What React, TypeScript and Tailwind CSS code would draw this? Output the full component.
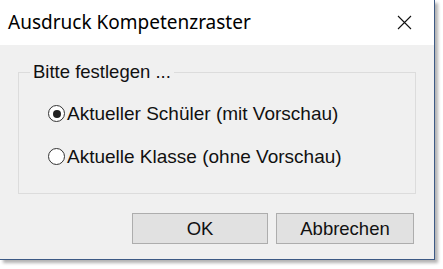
import React from 'react';

const body = { fontFamily: '"Liberation Sans", Arial, sans-serif' };

function Radio({ checked }: { checked?: boolean }) {
  return (
    <span className="w-[17px] h-[17px] rounded-full border-[1.5px] border-[#333] bg-white flex items-center justify-center shrink-0">
      {checked && <span className="w-[8px] h-[8px] rounded-full bg-[#222]" />}
    </span>
  );
}

export default function App() {
  return (
    <div className="w-[443px] h-[269px] bg-white">
      <div className="w-[435px] h-[260px] bg-[#f0f0f0] border-r border-b border-[#3d5a85] shadow-[3px_3px_3px_rgba(0,0,0,0.3)] flex flex-col">
        {/* Title bar */}
        <div className="h-[45px] bg-white flex items-center justify-between pl-[8px] pr-[22px] shrink-0">
          <span className="text-[19px] text-black" style={{ fontFamily: '"Noto Sans", sans-serif' }}>
            Ausdruck Kompetenzraster
          </span>
          <svg width="15" height="15" viewBox="0 0 15 15" className="text-[#111]">
            <path d="M1 1 L14 14 M14 1 L1 14" stroke="currentColor" strokeWidth="1.1" fill="none" />
          </svg>
        </div>

        {/* Content */}
        <div className="flex-1 flex flex-col px-[18px] pt-[16px]" style={body}>
          <fieldset className="border border-[#dcdcdc] w-[398px] h-[133px]">
            <legend className="ml-[11px] px-[3px] text-[18.5px] text-[#111] leading-[22px]">Bitte festlegen ...</legend>
            <div className="flex flex-col gap-[20px] pl-[29px] pt-[19px]">
              <label className="flex items-center gap-[2px] text-[19px] text-[#111] leading-[23px]">
                <Radio checked />
                <span>Aktueller Schüler (mit Vorschau)</span>
              </label>
              <label className="flex items-center gap-[2px] text-[19px] text-[#111] leading-[23px]">
                <Radio />
                <span>Aktuelle Klasse (ohne Vorschau)</span>
              </label>
            </div>
          </fieldset>

          <div className="flex justify-end gap-[8px] mt-[19px] pr-[2px]">
            <button className="w-[136px] h-[31px] bg-[#e1e1e1] border border-[#adadad] text-[18.5px] text-[#111]">OK</button>
            <button className="w-[138px] h-[31px] bg-[#e1e1e1] border border-[#adadad] text-[18.5px] text-[#111]">Abbrechen</button>
          </div>
        </div>
      </div>
    </div>
  );
}
